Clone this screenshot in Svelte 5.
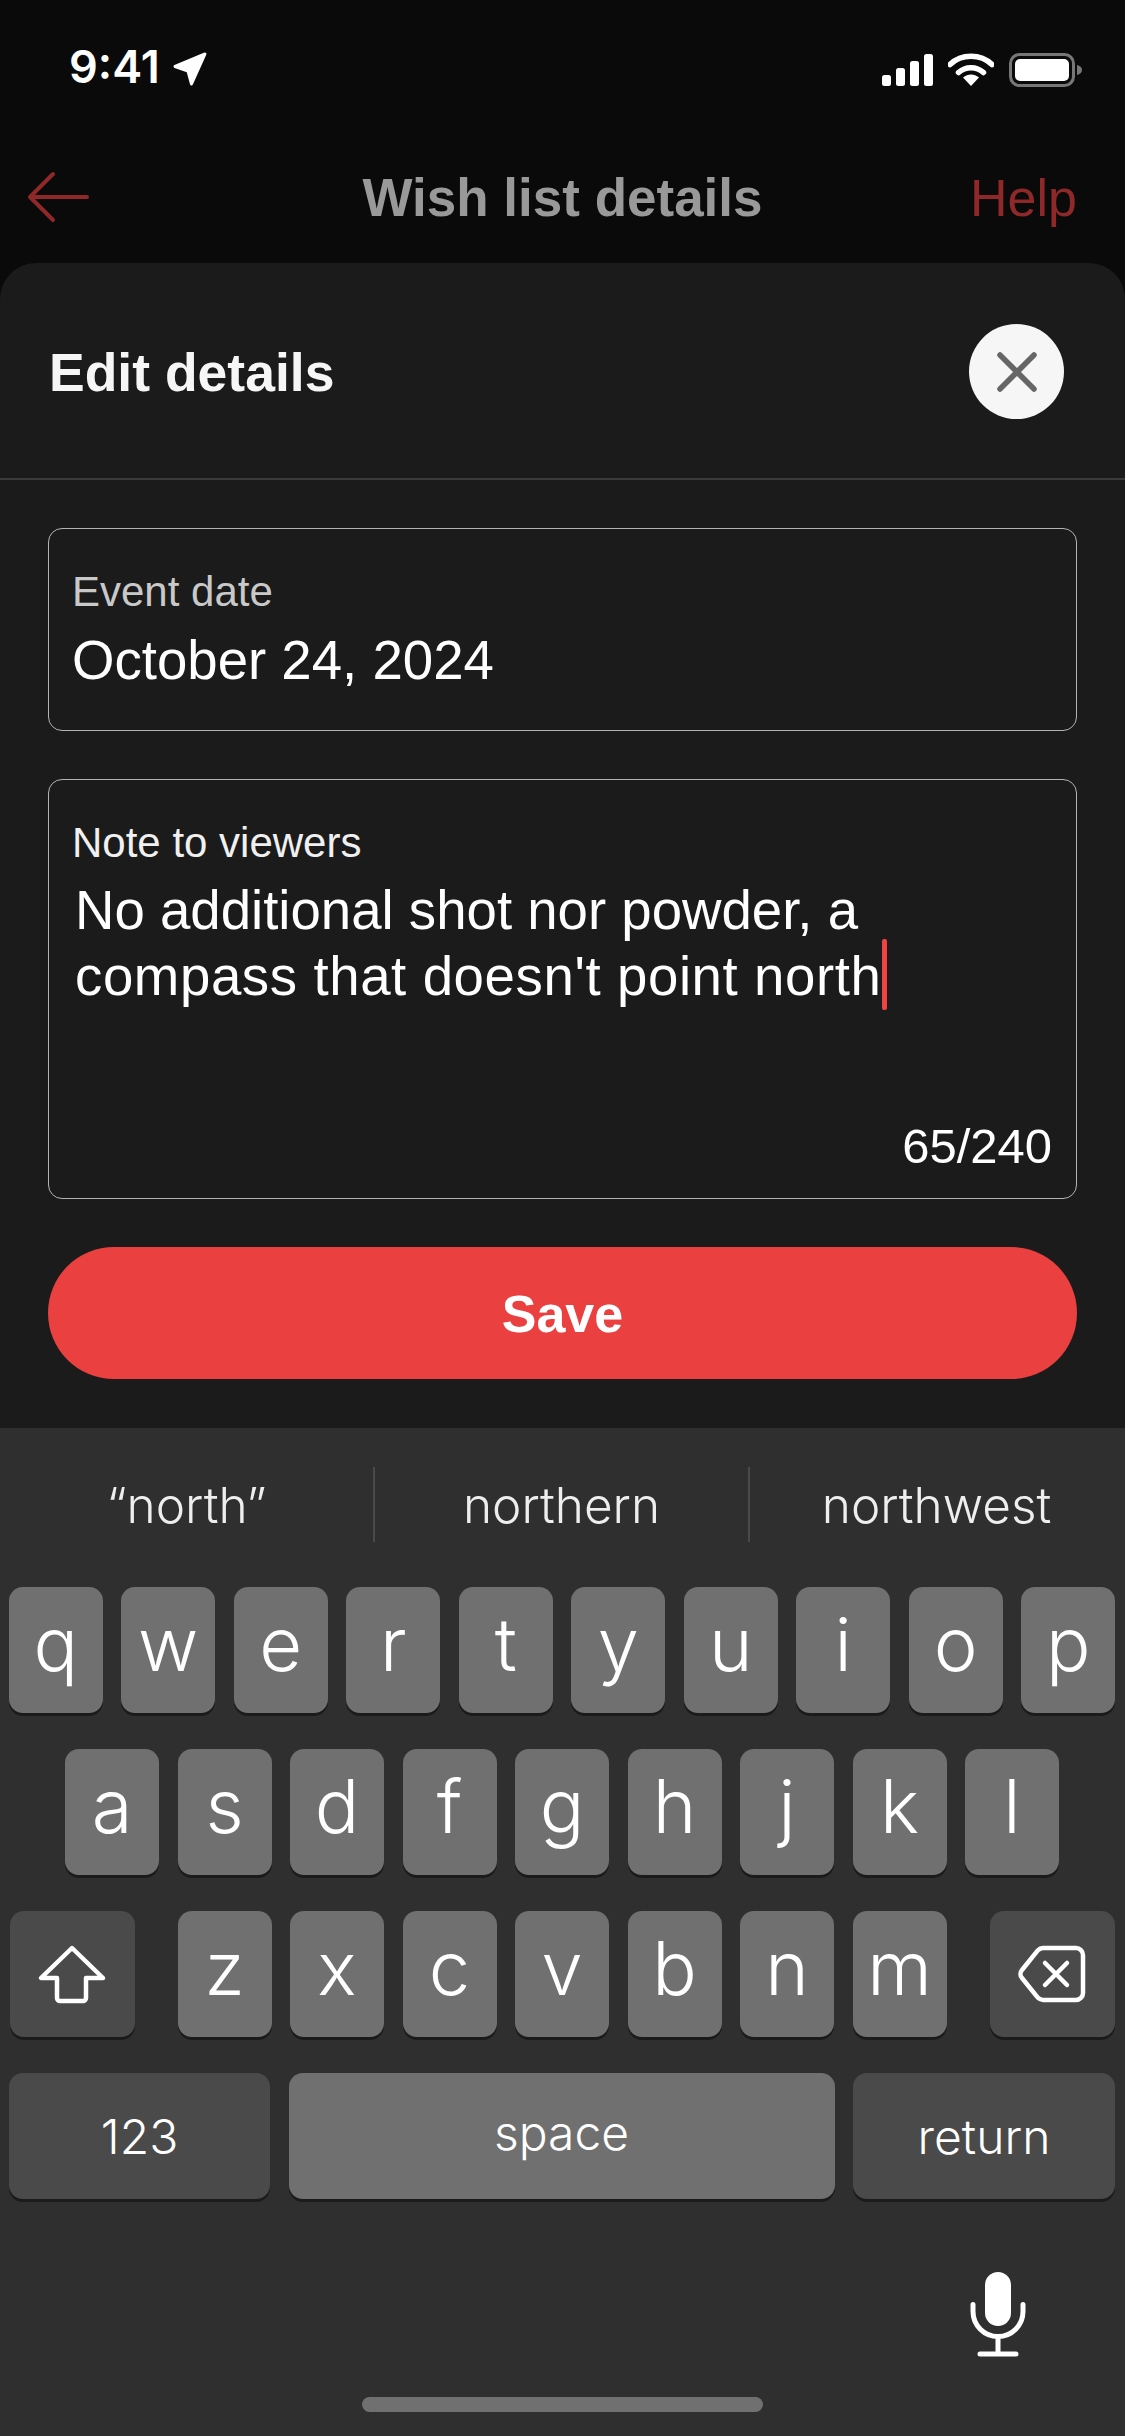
<script lang="ts">
  // Edit-details sheet over the wish list screen, with the iOS dark keyboard open.
  const suggestions = ['“north”', 'northern', 'northwest']
  const rowOne = ['q', 'w', 'e', 'r', 't', 'y', 'u', 'i', 'o', 'p']
  const rowTwo = ['a', 's', 'd', 'f', 'g', 'h', 'j', 'k', 'l']
  const rowThree = ['z', 'x', 'c', 'v', 'b', 'n', 'm']
</script>

<div class="screen">
  <header class="top">
    <div class="status">
      <div class="clock">
        <span>9:41</span>
        <svg class="loc" viewBox="0 0 36 34" width="36" height="34" aria-hidden="true">
          <path d="M33 2 3 14.500 16 19l3.500 13z" fill="#fff" stroke="#fff" stroke-width="3" stroke-linejoin="round" />
        </svg>
      </div>
      <div class="status-icons">
        <svg viewBox="0 0 51 32" width="51" height="32" aria-hidden="true">
          <rect x="0" y="21" width="9" height="11" rx="2.500" fill="#fff" />
          <rect x="14" y="14" width="9" height="18" rx="2.500" fill="#fff" />
          <rect x="28" y="7" width="9" height="25" rx="2.500" fill="#fff" />
          <rect x="42" y="0" width="9" height="32" rx="2.500" fill="#fff" />
        </svg>
        <svg viewBox="0 0 46 34" width="46" height="34" aria-hidden="true">
          <path d="M2 11.500C13.500 .5 32.500 .5 44 11.500" fill="none" stroke="#fff" stroke-width="5.500" stroke-linecap="round" />
          <path d="M10.500 19.500C17.500 13 28.500 13 35.500 19.500" fill="none" stroke="#fff" stroke-width="5.500" stroke-linecap="round" />
          <path d="M15 24.500C20 20.500 26 20.500 31 24.500L23 33z" fill="#fff" />
        </svg>
        <svg viewBox="0 0 73 34" width="73" height="34" aria-hidden="true">
          <rect x="1.500" y="1.500" width="63" height="31" rx="9" fill="none" stroke="#777" stroke-width="3" />
          <rect x="6" y="6" width="54" height="22" rx="5" fill="#fff" />
          <path d="M68 12c3 .6 5 2.500 5 5s-2 4.400-5 5z" fill="#777" />
        </svg>
      </div>
    </div>

    <nav class="nav">
      <svg class="back" viewBox="0 0 64 54" width="64" height="54" aria-hidden="true">
        <path d="M61 26H4M27 3 4 26l23 23" fill="none" stroke="#8f2828" stroke-width="4" stroke-linecap="round" stroke-linejoin="round" />
      </svg>
      <h1>Wish list details</h1>
      <span class="help">Help</span>
    </nav>
  </header>

  <section class="sheet">
    <div class="sheet-head">
      <h2>Edit details</h2>
      <button class="close" aria-label="Close">
        <svg viewBox="0 0 40 40" width="40" height="40" aria-hidden="true">
          <path d="M3 3l34 34M37 3 3 37" fill="none" stroke="#666" stroke-width="5.500" stroke-linecap="round" />
        </svg>
      </button>
    </div>

    <div class="form">
      <div class="field date">
        <span class="label muted">Event date</span>
        <span class="value">October 24, 2024</span>
      </div>

      <div class="field note">
        <span class="label">Note to viewers</span>
        <p class="value text">No additional shot nor powder, a<br /><span class="line-two">compass that doesn't point north</span><span class="caret"></span></p>
        <span class="count">65/240</span>
      </div>

      <button class="save">Save</button>
    </div>
  </section>

  <section class="keyboard">
    <div class="suggest">
      {#each suggestions as word}
        <span class="word">{word}</span>
      {/each}
    </div>

    <div class="rows">
      <div class="row">
        {#each rowOne as k}<span class="key">{k}</span>{/each}
      </div>
      <div class="row">
        {#each rowTwo as k}<span class="key">{k}</span>{/each}
      </div>
      <div class="row">
        <span class="key dark wide gap-r">
          <svg viewBox="0 0 70 60" width="70" height="60" aria-hidden="true">
            <path d="M35 4 4 34h16v20a3 3 0 0 0 3 3h23a3 3 0 0 0 3-3V34h17z" fill="none" stroke="#fff" stroke-width="4.500" stroke-linejoin="round" />
          </svg>
        </span>
        {#each rowThree as k}<span class="key">{k}</span>{/each}
        <span class="key dark wide gap-l">
          <svg viewBox="0 0 68 58" width="68" height="58" aria-hidden="true">
            <path d="M25 3h33a7 7 0 0 1 7 7v38a7 7 0 0 1-7 7H25a7 7 0 0 1-5-2.200L4 33a6 6 0 0 1 0-8L20 5.200A7 7 0 0 1 25 3z" fill="none" stroke="#fff" stroke-width="4.500" stroke-linejoin="round" />
            <path d="M27 18l22 22M49 18 27 40" fill="none" stroke="#fff" stroke-width="4.500" stroke-linecap="round" />
          </svg>
        </span>
      </div>
      <div class="row">
        <span class="key dark label-key num">123</span>
        <span class="key label-key space">space</span>
        <span class="key dark label-key ret">return</span>
      </div>
    </div>

    <div class="mic-row">
      <svg viewBox="0 0 56 86" width="56" height="86" aria-hidden="true">
        <rect x="15" y="1" width="26" height="54" rx="13" fill="#fff" />
        <path d="M3 33.500v7a25 25 0 0 0 50 0v-7" fill="none" stroke="#fff" stroke-width="5" stroke-linecap="round" />
        <path d="M28 66v17M10 83h36" fill="none" stroke="#fff" stroke-width="5" stroke-linecap="round" />
      </svg>
    </div>

    <div class="home-bar"></div>
  </section>
</div>

<style>
  :global(body) { margin: 0; background: #0a0a0a; }

  .screen {
    width: 1125px; height: 2436px; display: flex; flex-direction: column;
    overflow: hidden; background: #0a0a0a; color: #fff;
    font-family: "Liberation Sans", Arial, sans-serif;
  }

  .top { height: 263px; display: flex; flex-direction: column; flex: none; }
  .status {
    height: 112px; flex: none; display: flex; justify-content: space-between;
    padding: 0 43px 0 69px; box-sizing: border-box; align-items: flex-end;
  }
  .clock {
    display: flex; align-items: center; gap: 12px; font-family: Inter, sans-serif;
    font-size: 45px; font-weight: 600; line-height: 52px; height: 52px;
    margin-bottom: 19px;
  }
  .loc { margin-top: 4px; }
  .status-icons { display: flex; align-items: center; gap: 15px; margin-bottom: 25px; }

  .nav {
    position: relative; flex: 1; display: flex; align-items: center; justify-content: space-between;
    padding: 20px 48px 0 26px;
  }
  .nav h1 {
    position: absolute; left: 0; right: 0; margin: 0; text-align: center;
    font-size: 53px; font-weight: 700; color: #999; line-height: 64px;
  }
  .help { font-size: 52px; color: #8f2828; line-height: 64px; }

  .sheet {
    height: 1165px; flex: none; background: #1b1b1b; border-radius: 36px 36px 0 0;
    display: flex; flex-direction: column;
  }
  .sheet-head {
    height: 217px; flex: none; box-sizing: border-box; border-bottom: 2px solid #3a3a3a;
    display: flex; align-items: center; justify-content: space-between; padding: 2px 61px 0 49px;
  }
  .sheet-head h2 { margin: 2px 0 0; font-size: 53.500px; font-weight: 700; color: #f6f6f6; line-height: 60px; }
  .close {
    width: 95px; height: 95px; border-radius: 50%; border: 0; padding: 0; background: #f6f6f6;
    display: flex; align-items: center; justify-content: center;
  }

  .form { padding: 48px 48px 0 48px; display: flex; flex-direction: column; gap: 48px; }
  .field {
    box-sizing: border-box; display: flex; flex-direction: column; align-items: flex-start;
    border: 1.5px solid #b4b4b4; border-radius: 14px; padding: 40px 24px 26px 23px;
  }
  .date { height: 203px; }
  .note { height: 420px; }
  .label { font-size: 42px; line-height: 46px; color: #f0f0f0; }
  .label.muted { color: #c9c9c9; }
  .value { font-size: 54.600px; line-height: 66px; color: #fff; margin: 13px 0 0; }
  .text { margin: 12px 0 0 3px; }
  .line-two { letter-spacing: 0.6px; }
  .caret { display: inline-block; position: relative; width: 0; height: 0; }
  .caret::after {
    content: ''; position: absolute; left: 0; bottom: -15px; width: 5px; height: 71px;
    background: #ef4444; border-radius: 2px;
  }
  .count { font-size: 49px; line-height: 52px; margin-top: auto; align-self: flex-end; }

  .save {
    height: 132px; border: 0; border-radius: 66px; background: #ea4040; color: #fff;
    font-family: inherit; font-size: 52px; font-weight: 700; padding: 2px 0 0;
  }

  .keyboard {
    flex: 1; background: #2f2f30; position: relative; font-family: Inter, sans-serif;
    font-weight: 300;
  }
  .suggest { display: flex; height: 159px; box-sizing: border-box; padding: 39px 2px 0 0; }
  .word {
    flex: 1; height: 75px; display: flex; align-items: center; justify-content: center;
    font-size: 49.500px; color: #eee; border-left: 2px solid #4a4a4b;
  }
  .word:first-child { border-left: 0; }

  .rows { display: flex; flex-direction: column; gap: 36px; margin-right: 1px; }
  .row { display: flex; justify-content: center; gap: 18.500px; }
  .key {
    width: 94px; height: 126px; flex: none; border-radius: 14px; background: #707070;
    box-shadow: 0 3px 0 #1b1b1b; display: flex; align-items: center; justify-content: center;
    font-size: 74px; color: #fff; padding-bottom: 12px; box-sizing: border-box;
  }
  .key.dark { background: #4a4a4a; }
  .key.wide { width: 125px; padding-bottom: 0; }
  .gap-r { margin-right: 24.500px; }
  .gap-l { margin-left: 24.500px; }
  .label-key { font-size: 48px; padding-bottom: 0; }
  .num { width: 261px; }
  .space { width: 546px; padding-bottom: 8px; }
  .ret { width: 262px; }

  .mic-row { display: flex; justify-content: flex-end; padding: 72px 99px 0 0; }

  .home-bar {
    position: absolute; left: 362px; top: 969px; width: 401px; height: 15px;
    background: #707070; border-radius: 8px;
  }
</style>
